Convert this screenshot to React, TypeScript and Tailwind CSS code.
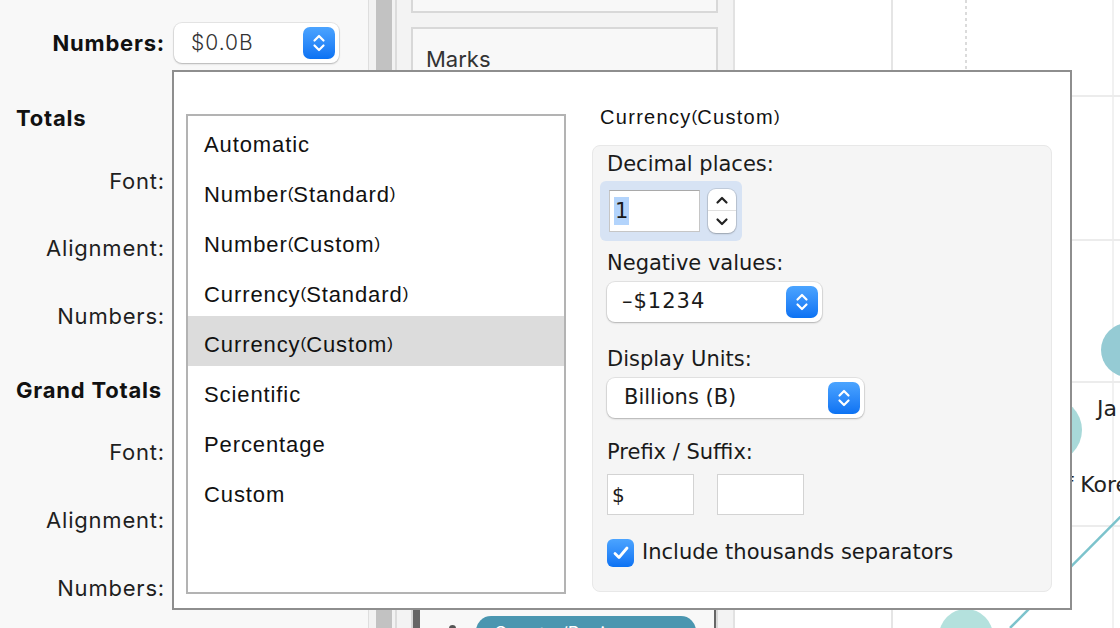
import React from 'react';

const listItems = [
  { name: 'Automatic' },
  { name: 'Number', sub: 'Standard' },
  { name: 'Number', sub: 'Custom' },
  { name: 'Currency', sub: 'Standard' },
  { name: 'Currency', sub: 'Custom', selected: true },
  { name: 'Scientific' },
  { name: 'Percentage' },
  { name: 'Custom' },
];

const Chevrons = () => (
  <svg width="16" height="22" viewBox="0 0 16 22">
    <path d="M3.5 8.5 L8 4 L12.5 8.5" stroke="white" strokeWidth="2.2" fill="none" strokeLinecap="round" strokeLinejoin="round" />
    <path d="M3.5 13.5 L8 18 L12.5 13.5" stroke="white" strokeWidth="2.2" fill="none" strokeLinecap="round" strokeLinejoin="round" />
  </svg>
);

const BlueButton = () => (
  <div className="w-[32px] h-[32px] rounded-[7px] bg-linear-to-b from-[#4ba4ff] to-[#0a72f3] flex items-center justify-center shrink-0">
    <Chevrons />
  </div>
);

const PopSelect = ({ value, width, pl }: { value: string; width: string; pl: string }) => (
  <div
    className={`h-[40px] ${width} ${pl} pr-[4px] bg-white rounded-[8px] shadow-[0_0_0_1px_rgba(0,0,0,0.07),0_1px_2px_rgba(0,0,0,0.22)] flex items-center justify-between`}
  >
    <span>{value}</span>
    <BlueButton />
  </div>
);

const SideLabel = ({ text, mt }: { text: string; mt: string }) => (
  <div className={`${mt} h-[40px] w-[165px] shrink-0 flex items-center justify-end`}>{text}</div>
);

const Paren = ({ children }: { children: React.ReactNode }) => (
  <span className="text-[17px] tracking-normal">{children}</span>
);

export default function App() {
  return (
    <div className="relative w-[1120px] h-[628px] overflow-hidden flex bg-white">
      {/* left formatting pane */}
      <div className="w-[368px] h-full shrink-0 bg-[#f8f8f8] flex flex-col pt-[23px] font-['Inter',sans-serif] text-[22px] tracking-[0.8px] text-[#1f1f1f]">
        <div className="h-[40px] shrink-0 flex items-center">
          <div className="w-[165px] text-right font-bold text-[#111]">Numbers:</div>
          <div className="ml-[9px] text-[21px] tracking-[1px] text-[#333] font-light">
            <PopSelect value="$0.0B" width="w-[165px]" pl="pl-[17px]" />
          </div>
        </div>
        <div className="mt-[35px] h-[40px] shrink-0 flex items-center pl-[16px] font-bold text-[#111]">Totals</div>
        <SideLabel text="Font:" mt="mt-[23px]" />
        <SideLabel text="Alignment:" mt="mt-[27px]" />
        <SideLabel text="Numbers:" mt="mt-[28px]" />
        <div className="mt-[34px] h-[40px] shrink-0 flex items-center pl-[16px] font-bold text-[#111]">Grand Totals</div>
        <SideLabel text="Font:" mt="mt-[22px]" />
        <SideLabel text="Alignment:" mt="mt-[28px]" />
        <SideLabel text="Numbers:" mt="mt-[28px]" />
      </div>

      {/* splitter */}
      <div className="w-[1px] h-full shrink-0 bg-[#dedede]" />
      <div className="w-[7px] h-full shrink-0 bg-[#f2f2f2]" />
      <div className="w-[16px] h-full shrink-0 bg-[#c2c2c2]" />
      <div className="w-[3px] h-full shrink-0 bg-[#f2f2f2]" />
      <div className="w-[2px] h-full shrink-0 bg-[#dcdcdc]" />

      {/* cards pane */}
      <div className="w-[336px] h-full shrink-0 overflow-hidden bg-[#f3f3f3] flex flex-col pl-[14px] pr-[15px] font-['Inter',sans-serif]">
        <div className="h-[13px] shrink-0 border-2 border-t-0 border-[#d8d8d8] bg-[#f8f8f8]" />
        <div className="mt-[14px] h-[620px] shrink-0 border-2 border-b-0 border-[#d8d8d8] bg-[#f8f8f8] flex flex-col">
          <div className="pl-[13px] pt-[15px] text-[22px] leading-[30px] text-[#333] shrink-0">Marks</div>
          <div className="mt-[532px] h-[60px] shrink-0 border-l-[7px] border-r-2 border-[#666] bg-[#f8f8f8] flex items-start">
            <div className="ml-[29px] mt-[19px] w-[7px] h-[7px] rounded-full bg-[#555]" />
            <div className="ml-[20px] mt-[10px] w-[220px] h-[30px] rounded-full bg-[#4a96b0] text-white text-[18px] pl-[18px] pt-[4px]">
              Country/Region
            </div>
          </div>
        </div>
      </div>

      {/* chart */}
      <div className="w-[2px] h-full shrink-0 bg-[#e2e2e2]" />
      <div className="flex-1 h-full bg-white">
        <svg width="385" height="628" viewBox="0 0 385 628">
          <line x1="0" y1="96" x2="385" y2="96" stroke="#ececec" strokeWidth="2" />
          <line x1="0" y1="240" x2="385" y2="240" stroke="#ececec" strokeWidth="2" />
          <line x1="0" y1="382" x2="385" y2="382" stroke="#ececec" strokeWidth="2" />
          <line x1="0" y1="526" x2="385" y2="526" stroke="#ececec" strokeWidth="2" />
          <line x1="157" y1="0" x2="157" y2="628" stroke="#dcdcdc" strokeWidth="1.5" />
          <line x1="231" y1="0" x2="231" y2="628" stroke="#c4c4c4" strokeWidth="1.2" strokeDasharray="3 3" />
          <line x1="378" y1="0" x2="378" y2="628" stroke="#ececec" strokeWidth="1.5" />
          <circle cx="393" cy="350" r="27" fill="#95cbd4" />
          <circle cx="315" cy="430" r="32" fill="#a8d9d9" />
          <circle cx="231" cy="636" r="27" fill="#b4e1dd" />
          <line x1="420" y1="482" x2="275" y2="628" stroke="#7cc3cc" strokeWidth="2.5" />
          <text x="362" y="416" fontSize="22" fill="#222" fontFamily="DejaVu Sans, sans-serif">Ja</text>
          <text x="317" y="492" fontSize="22" fill="#222" fontFamily="DejaVu Sans, sans-serif">of Korea</text>
        </svg>
      </div>

      {/* format dialog */}
      <div className="absolute left-[172px] top-[70px] w-[900px] h-[540px] border-2 border-[#8e8e8e] bg-white flex pl-[12px] pt-[30px]">
        <div className="mt-[12px] w-[380px] h-[480px] border-2 border-[#b3b3b3] bg-white flex flex-col font-['Liberation_Sans',Arial,sans-serif] text-[22px] tracking-[0.9px] text-[#111]">
          {listItems.map((it, i) => (
            <div
              key={i}
              className={`h-[50px] shrink-0 flex items-center pl-[16px] pt-[6px] ${it.selected ? 'bg-[#dcdcdc]' : ''}`}
            >
              {it.name}
              {it.sub && (
                <>
                  <Paren>(</Paren>
                  {it.sub}
                  <Paren>)</Paren>
                </>
              )}
            </div>
          ))}
        </div>

        <div className="ml-[26px] w-[460px] flex flex-col">
          <div className="h-[30px] pl-[8px] flex items-center font-['Liberation_Sans',Arial,sans-serif] text-[20px] tracking-[1.3px] text-[#111]">
            Currency<Paren>(</Paren>Custom<Paren>)</Paren>
          </div>
          <div className="mt-[13px] h-[447px] bg-[#f5f5f5] border border-[#e8e8e8] rounded-[8px] pl-[14px] pt-[6px] flex flex-col font-['DejaVu_Sans',sans-serif] text-[21px] text-[#1a1a1a]">
            <div className="h-[24px] leading-[24px]">Decimal places:</div>
            <div className="mt-[5px] ml-[-7px] w-[142px] h-[60px] rounded-[6px] bg-[#d7e3f4] flex items-start pl-[9px] pt-[9px]">
              <div className="w-[91px] h-[42px] bg-white border border-[#c6c6c6] border-t-[#a9a9a9] flex items-center pl-[4px]">
                <span className="bg-[#b3d4fc] px-[1px] leading-[28px]">1</span>
              </div>
              <div className="ml-[8px] mt-[-1px] w-[28px] h-[44px] bg-white rounded-[8px] shadow-[0_0_0_1px_rgba(0,0,0,0.1),0_1px_2px_rgba(0,0,0,0.2)] flex flex-col">
                <div className="h-[22px] flex items-center justify-center border-b border-[#e0e0e0]">
                  <svg width="14" height="10" viewBox="0 0 14 10">
                    <path d="M2.5 7.5 L7 3 L11.5 7.5" stroke="#222" strokeWidth="2.2" fill="none" strokeLinecap="round" strokeLinejoin="round" />
                  </svg>
                </div>
                <div className="h-[22px] flex items-center justify-center">
                  <svg width="14" height="10" viewBox="0 0 14 10">
                    <path d="M2.5 2.5 L7 7 L11.5 2.5" stroke="#222" strokeWidth="2.2" fill="none" strokeLinecap="round" strokeLinejoin="round" />
                  </svg>
                </div>
              </div>
            </div>

            <div className="mt-[10px] h-[24px] leading-[24px]">Negative values:</div>
            <div className="mt-[7px] tracking-[1px]">
              <PopSelect value="–$1234" width="w-[215px]" pl="pl-[15px]" />
            </div>

            <div className="mt-[25px] h-[24px] leading-[24px]">Display Units:</div>
            <div className="mt-[7px]">
              <PopSelect value="Billions (B)" width="w-[257px]" pl="pl-[17px]" />
            </div>

            <div className="mt-[22px] h-[24px] leading-[24px]">Prefix / Suffix:</div>
            <div className="mt-[10px] flex gap-[23px]">
              <div className="w-[87px] h-[41px] bg-white border border-[#d3d3d3] flex items-center pl-[4px] text-[20px]">$</div>
              <div className="w-[87px] h-[41px] bg-white border border-[#d3d3d3]" />
            </div>

            <div className="mt-[22px] flex items-center">
              <div className="w-[27px] h-[28px] rounded-[6px] bg-linear-to-b from-[#4ba4ff] to-[#0a72f3] flex items-center justify-center">
                <svg width="18" height="16" viewBox="0 0 18 16">
                  <path d="M3 8.5 L7 12.5 L15 3" stroke="white" strokeWidth="2.8" fill="none" strokeLinecap="round" strokeLinejoin="round" />
                </svg>
              </div>
              <span className="ml-[8px]">Include thousands separators</span>
            </div>
          </div>
        </div>
      </div>
    </div>
  );
}
